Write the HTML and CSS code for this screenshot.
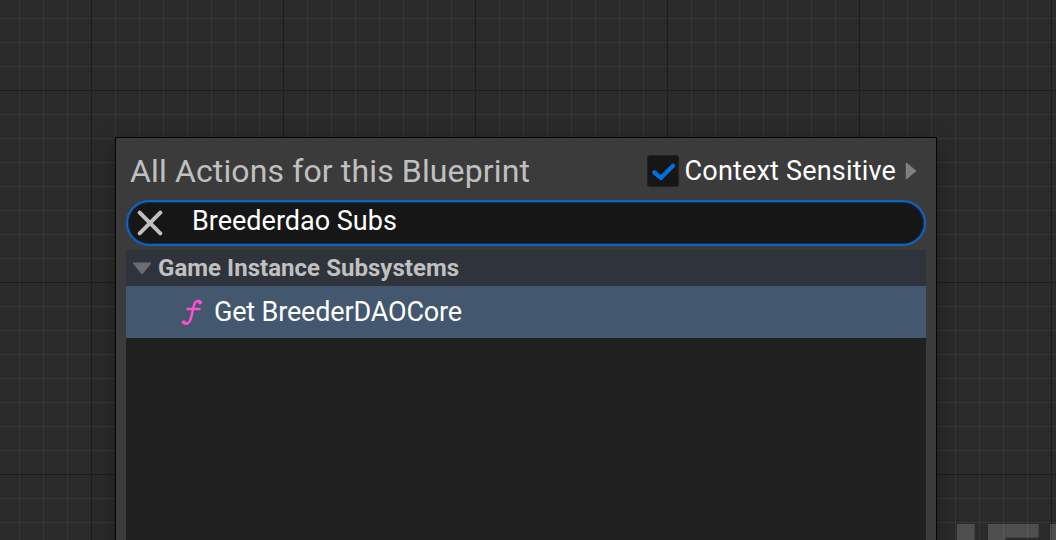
FILE: index.html
```html
<!DOCTYPE html>
<html lang="en">
<head>
<meta charset="utf-8">
<title>Blueprint Actions</title>
<link rel="stylesheet" href="styles.css">
</head>
<body>
<main class="graph">
  <svg class="watermark" width="99" height="16" viewBox="0 0 99 16" aria-hidden="true">
    <path class="mark-edge" d="M0 0H18V16H0zM31 0H82V14H49V16H31zM93 0H99V16H93z"/>
    <path class="mark-face" d="M0 0H17V16H0zM31 0H81V13H48V16H31zM93 0H99V16H93z"/>
  </svg>
  <section class="menu">
    <header class="menu-head">
      <h1 class="title">All Actions for this Blueprint</h1>
      <div class="context">
        <span class="checkbox">
          <svg width="32" height="32" viewBox="0 0 32 32"><path class="check" d="M7.3 17.3L13.8 23L26 10.7"/></svg>
        </span>
        <span class="context-label">Context Sensitive</span>
        <svg class="expand" width="12" height="18" viewBox="0 0 12 18"><path d="M1.5 1.5L10.5 9L1.5 16.5z"/></svg>
      </div>
    </header>
    <div class="search">
      <svg class="clear" width="26" height="26" viewBox="0 0 26 26"><path d="M2.7 2.7L23.3 23.3M23.3 2.7L2.7 23.3"/></svg>
      <span class="query">Breederdao Subs</span>
    </div>
    <div class="results">
      <div class="category">
        <svg class="collapse" width="20" height="13" viewBox="0 0 20 13"><path d="M1 1H19L10 12z"/></svg>
        <span class="category-label">Game Instance Subsystems</span>
      </div>
      <div class="item">
        <svg class="function" width="22" height="28" viewBox="0 0 22 28">
          <path d="M19.5 4.1C17.3 1.7 14.1 3 13.1 7L9.7 21C8.7 25.3 5.2 26.8 2.2 24.5M6.5 11H18.5"/>
          <circle cx="19" cy="4.6" r="2"/><circle cx="2.8" cy="24.3" r="2"/>
        </svg>
        <span class="item-label">Get BreederDAOCore</span>
      </div>
    </div>
  </section>
</main>
</body>
</html>
```
FILE: styles.css
```css
* { box-sizing: border-box; }
body { margin: 0; overflow: hidden; font-family: Roboto, "Liberation Sans", sans-serif; }
svg { display: block; flex: none; }
.graph {
  position: relative;
  width: 1056px;
  height: 540px;
  overflow: hidden;
  padding: 137px 0 0 115px;
  background-color: #2a2a2a;
  background-image:
    linear-gradient(90deg, #1c1c1c 1px, transparent 1px),
    linear-gradient(#1c1c1c 1px, transparent 1px),
    linear-gradient(90deg, #363636 1px, transparent 1px),
    linear-gradient(#363636 1px, transparent 1px);
  background-size: 192px 192px, 192px 192px, 24px 24px, 24px 24px;
  background-position: 91px 90px, 91px 90px, 19px 18px, 19px 18px;
}
.watermark { position: absolute; left: 957px; top: 524px; }
.mark-edge { fill: rgba(255, 255, 255, .11); }
.mark-face { fill: rgba(255, 255, 255, .07); }
.menu {
  position: relative;
  width: 822px;
  height: 440px;
  padding: 0 10px;
  border: 1px solid #050505;
  background: #3b3b3b;
  box-shadow: 0 6px 20px rgba(0, 0, 0, .3);
}
.menu-head { display: flex; align-items: center; justify-content: space-between; height: 62px; padding: 4px 9px 0 4px; }
.title { margin: 0; font-size: 32px; font-weight: 400; line-height: 40px; color: #c0c0c0; white-space: nowrap; letter-spacing: .13px; }
.context { display: flex; align-items: center; }
.checkbox { width: 32px; height: 32px; border-radius: 4px; background: #161616; box-shadow: inset 0 0 0 1px #222; }
.check { fill: none; stroke: #0070e0; stroke-width: 4.2; stroke-linecap: round; stroke-linejoin: round; }
.context-label { margin-left: 6px; font-size: 27px; line-height: 32px; color: #fff; white-space: nowrap; letter-spacing: .18px; }
.expand { margin-left: 9px; fill: #808080; stroke: #808080; stroke-width: 1.5; stroke-linejoin: round; }
.search { display: flex; align-items: center; height: 46px; padding-left: 9px; border: 2px solid #0f64c2; border-radius: 23px; background: #161616; box-shadow: inset 0 0 0 1px #13315a; }
.clear { fill: none; stroke: #c0c0c0; stroke-width: 4; stroke-linecap: round; }
.query { margin: -4px 0 0 29px; font-size: 27px; line-height: 32px; color: #fff; white-space: nowrap; }
.results { height: 320px; margin-top: 4px; background: #202020; }
.category { display: flex; align-items: center; height: 36px; padding-left: 6px; background: #2f333c; }
.collapse { fill: #6c6d70; stroke: #6c6d70; stroke-width: 1; stroke-linejoin: round; }
.category-label { margin-left: 6px; font-size: 24px; font-weight: 700; line-height: 30px; color: #c0c0c0; white-space: nowrap; letter-spacing: .04px; }
.item { display: flex; align-items: center; height: 52px; padding-left: 55px; background: #43586e; }
.function { fill: #ff50c8; }
.function path { fill: none; stroke: #ff50c8; stroke-width: 2.6; stroke-linecap: round; }
.item-label { margin-left: 11px; font-size: 27px; line-height: 32px; color: #fff; white-space: nowrap; letter-spacing: -.17px; }
```
